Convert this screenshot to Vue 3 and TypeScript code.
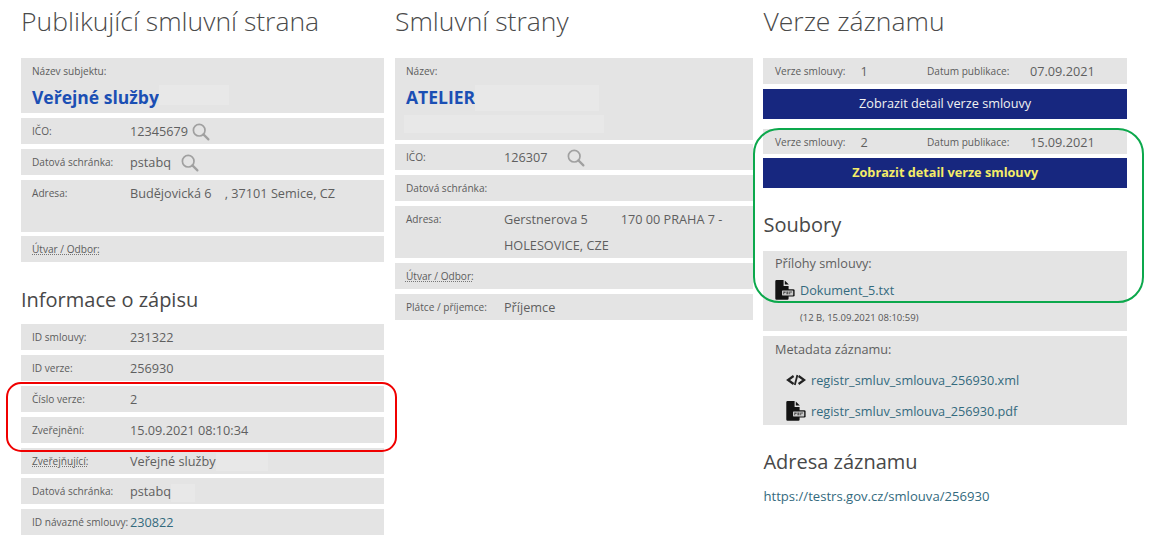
<script setup lang="ts">
interface Row {
  label: string
  value?: string
  dotted?: boolean
  link?: boolean
  search?: number
  patch?: number
  tall?: boolean
}

const fileBody = 'M1.5 0H8.6V6H13.6V18.6a1.2 1.2 0 0 1-1.2 1.2H1.5a1.2 1.2 0 0 1-1.2-1.2V1.2A1.2 1.2 0 0 1 1.5 0z'
const fileFold = 'M9.8 0.4 L13.8 4.6 H9.8 Z'

const publisher: Row[] = [
  { label: 'IČO:', value: '12345679', search: 4 },
  { label: 'Datová schránka:', value: 'pstabq', search: 10 },
  { label: 'Adresa:', value: 'Budějovická 6    , 37101 Semice, CZ', tall: true },
  { label: 'Útvar / Odbor:', dotted: true }
]

const record: Row[] = [
  { label: 'ID smlouvy:', value: '231322' },
  { label: 'ID verze:', value: '256930' },
  { label: 'Číslo verze:', value: '2' },
  { label: 'Zveřejnění:', value: '15.09.2021 08:10:34' },
  { label: 'Zveřejňující:', value: 'Veřejné služby', dotted: true, patch: 52 },
  { label: 'Datová schránka:', value: 'pstabq', patch: 24 },
  { label: 'ID návazné smlouvy:', value: '230822', link: true }
]

const parties: Row[] = [
  { label: 'IČO:', value: '126307', search: 19 },
  { label: 'Datová schránka:' },
  { label: 'Adresa:', value: 'Gerstnerova 5          170 00 PRAHA 7 - HOLESOVICE, CZE', tall: true },
  { label: 'Útvar / Odbor:', dotted: true },
  { label: 'Plátce / příjemce:', value: 'Příjemce' }
]
</script>

<template>
  <div class="page">
    <section class="column">
      <h1>Publikující smluvní strana</h1>
      <div class="name-box">
        <span class="label">Název subjektu:</span>
        <div class="name">Veřejné služby<i class="patch wide"></i></div>
      </div>
      <div v-for="row in publisher" :key="row.label" class="row" :class="{ tall: row.tall }">
        <span class="label" :class="{ dotted: row.dotted }">{{ row.label }}</span>
        <span class="value">
          <span class="pre">{{ row.value }}</span>
          <svg v-if="row.search" class="search" :style="{ marginLeft: row.search + 'px' }" viewBox="0 0 18 18" width="18" height="18">
            <circle cx="7.2" cy="7.2" r="5.8" fill="none" stroke="#a0a0a0" stroke-width="1.7" />
            <path d="M11.4 11.4 L16.4 16.4" stroke="#a0a0a0" stroke-width="2.2" stroke-linecap="round" />
          </svg>
        </span>
      </div>

      <h2 class="sub">Informace o zápisu</h2>
      <div v-for="row in record" :key="row.label" class="row">
        <span class="label" :class="{ dotted: row.dotted }">{{ row.label }}</span>
        <span class="value" :class="{ link: row.link }">
          {{ row.value }}<i v-if="row.patch" class="patch" :style="{ width: row.patch + 'px' }"></i>
        </span>
      </div>
    </section>

    <section class="column">
      <h1>Smluvní strany</h1>
      <div class="name-box party">
        <span class="label">Název:</span>
        <div class="name">ATELIER<i class="patch party-patch"></i></div>
        <i class="patch second-line"></i>
      </div>
      <div v-for="row in parties" :key="row.label" class="row" :class="{ tall: row.tall }">
        <span class="label" :class="{ dotted: row.dotted }">{{ row.label }}</span>
        <span class="value">
          <span class="pre">{{ row.value }}</span>
          <svg v-if="row.search" class="search" :style="{ marginLeft: row.search + 'px' }" viewBox="0 0 18 18" width="18" height="18">
            <circle cx="7.2" cy="7.2" r="5.8" fill="none" stroke="#a0a0a0" stroke-width="1.7" />
            <path d="M11.4 11.4 L16.4 16.4" stroke="#a0a0a0" stroke-width="2.2" stroke-linecap="round" />
          </svg>
        </span>
      </div>
    </section>

    <section class="column">
      <h1>Verze záznamu</h1>
      <div class="version">
        <span class="label v-label">Verze smlouvy:</span><span class="value v-num">1</span>
        <span class="label v-label date">Datum publikace:</span><span class="value">07.09.2021</span>
      </div>
      <div class="detail">Zobrazit detail verze smlouvy</div>
      <div class="version second">
        <span class="label v-label">Verze smlouvy:</span><span class="value v-num">2</span>
        <span class="label v-label date">Datum publikace:</span><span class="value">15.09.2021</span>
      </div>
      <div class="detail current">Zobrazit detail verze smlouvy</div>

      <h2 class="files">Soubory</h2>
      <div class="file-box">
        <div class="box-title">Přílohy smlouvy:</div>
        <div class="file first">
          <svg class="file-icon" viewBox="0 0 20 20" width="20" height="20">
            <path :d="fileBody" fill="#141414" />
            <path :d="fileFold" fill="#141414" />
            <rect x="5.6" y="9.2" width="14" height="7.4" rx="1.4" fill="#141414" />
            <rect x="7" y="10.4" width="11.2" height="5" rx="0.6" fill="#c9c9c9" />
            <path d="M8.2 11.6h2.4v1.4H9.2v1.2h-1z M11.4 11.6h2v2.6h-2z M14.2 11.6h2.8v1h-1.8v1.6h-1z" fill="#555" />
          </svg>
          <a class="link">Dokument_5.txt</a>
        </div>
        <div class="meta">(12 B, 15.09.2021 08:10:59)</div>
      </div>
      <div class="file-box meta-box">
        <div class="box-title">Metadata záznamu:</div>
        <div class="file indented">
          <svg class="file-icon" viewBox="0 0 20 12" width="20" height="12">
            <path d="M7.6 2 L2 6 L7.6 10 M12.6 2 L18.2 6 L12.6 10" fill="none" stroke="#222" stroke-width="2.2" />
            <path d="M11.4 1 L8.8 11" stroke="#222" stroke-width="1.8" />
          </svg>
          <a class="link">registr_smluv_smlouva_256930.xml</a>
        </div>
        <div class="file indented pdf">
          <svg class="file-icon" viewBox="0 0 20 20" width="20" height="20">
            <path :d="fileBody" fill="#141414" />
            <path :d="fileFold" fill="#141414" />
            <rect x="5.6" y="9.2" width="14" height="7.4" rx="1.4" fill="#141414" />
            <rect x="7" y="10.4" width="11.2" height="5" rx="0.6" fill="#c9c9c9" />
            <path d="M8.2 11.6h2.4v1.4H9.2v1.2h-1z M11.4 11.6h2v2.6h-2z M14.2 11.6h2.8v1h-1.8v1.6h-1z" fill="#555" />
          </svg>
          <a class="link">registr_smluv_smlouva_256930.pdf</a>
        </div>
      </div>
      <h2 class="address">Adresa záznamu</h2>
      <a class="link url">https://testrs.gov.cz/smlouva/256930</a>
    </section>

    <div class="mark red"></div>
    <div class="mark green"></div>
  </div>
</template>

<style scoped>
.page {
  position: relative;
  width: 1150px;
  height: 540px;
  overflow: hidden;
  box-sizing: border-box;
  padding-left: 21px;
  display: grid;
  grid-template-columns: 363.2px 357.7px 363.4px;
  column-gap: 10.8px;
  background: #fff;
  font-family: "Open Sans", sans-serif;
  color: #555;
}

.column {
  display: flex;
  flex-direction: column;
  gap: 4.8px;
  align-items: stretch;
}

h1 {
  margin: 0;
  height: 53.5px;
  font-size: 26.5px;
  font-weight: 300;
  line-height: 42px;
  color: #4a4a4a;
}

h2 {
  margin: 0;
  font-size: 20px;
  font-weight: 400;
  color: #484848;
}

.sub {
  height: 52.4px;
  line-height: 65px;
}

.name-box {
  height: 55px;
  box-sizing: border-box;
  padding: 0 11px;
  background: #e4e4e4;
  display: flex;
  flex-direction: column;
  align-items: flex-start;
}

.name-box.party {
  height: 81.4px;
}

.name {
  margin-top: 1px;
  font-size: 17.5px;
  font-weight: 700;
  line-height: 24px;
  color: #1b4fb4;
  display: flex;
}

.patch {
  display: inline-block;
  height: 18px;
  vertical-align: middle;
  background: #e8e8e8;
}

.wide {
  width: 70px;
  height: 20px;
}

.party-patch {
  width: 124px;
  height: 26px;
}

.second-line {
  width: 200px;
  height: 18px;
  margin: 4px 0 0 -2px;
}

.row {
  height: 26px;
  padding-left: 11px;
  display: flex;
  background: #e4e4e4;
}

.row.tall {
  height: 52px;
}

.label {
  flex: none;
  width: 98px;
  font-size: 10.1px;
  line-height: 26px;
  white-space: nowrap;
  color: #5c5c5c;
}

.label.dotted {
  height: 20px;
  text-decoration: underline dotted #777;
}

.value {
  flex: 1;
  font-size: 12.7px;
  line-height: 26px;
  color: #5f5f5f;
}

.pre {
  white-space: pre-wrap;
}

.search {
  vertical-align: -5px;
}

.link {
  color: #336a7e;
}

.version {
  height: 26px;
  padding-left: 11.5px;
  display: flex;
  background: #e4e4e4;
}

.version.second {
  height: 25px;
  margin: 5.4px 0 -0.5px;
}

.version .value {
  flex: none;
}

.v-label {
  width: 85.5px;
}

.v-label.date {
  width: 103px;
}

.v-num {
  width: 66.5px;
}

.detail {
  height: 29.8px;
  font-size: 12.7px;
  line-height: 29px;
  text-align: center;
  color: #f2f2f2;
  background: #17277f;
}

.detail.current {
  font-weight: 700;
  color: #f4ec68;
}

.files {
  height: 53.1px;
  line-height: 64px;
}

.file-box {
  height: 80.6px;
  box-sizing: border-box;
  padding-left: 11.5px;
  background: #e4e4e4;
}

.meta-box {
  height: 89.2px;
  padding-top: 1px;
}

.box-title {
  font-size: 12.7px;
  line-height: 24px;
  color: #5f5f5f;
}

.file {
  display: flex;
  align-items: center;
  height: 28px;
  font-size: 12.7px;
}

.file.first {
  margin-top: 1px;
}

.file-icon {
  flex: none;
  margin-right: 5px;
}

.meta {
  margin: 7px 0 0 25px;
  font-size: 9.5px;
  line-height: 14px;
}

.indented {
  margin-left: 11px;
  margin-top: 5px;
}

.indented.pdf {
  margin-top: 3px;
}

.address {
  height: 54px;
  line-height: 64px;
}

.url {
  font-size: 13.1px;
  line-height: 14px;
}

.mark {
  position: absolute;
  box-sizing: border-box;
  pointer-events: none;
}

.red {
  left: 6px;
  top: 382px;
  width: 391px;
  height: 70px;
  border: 2px solid #f00000;
  border-radius: 15px;
}

.green {
  left: 753px;
  top: 128px;
  width: 391px;
  height: 175px;
  border: 2px solid #0ca84c;
  border-radius: 26px;
}
</style>
